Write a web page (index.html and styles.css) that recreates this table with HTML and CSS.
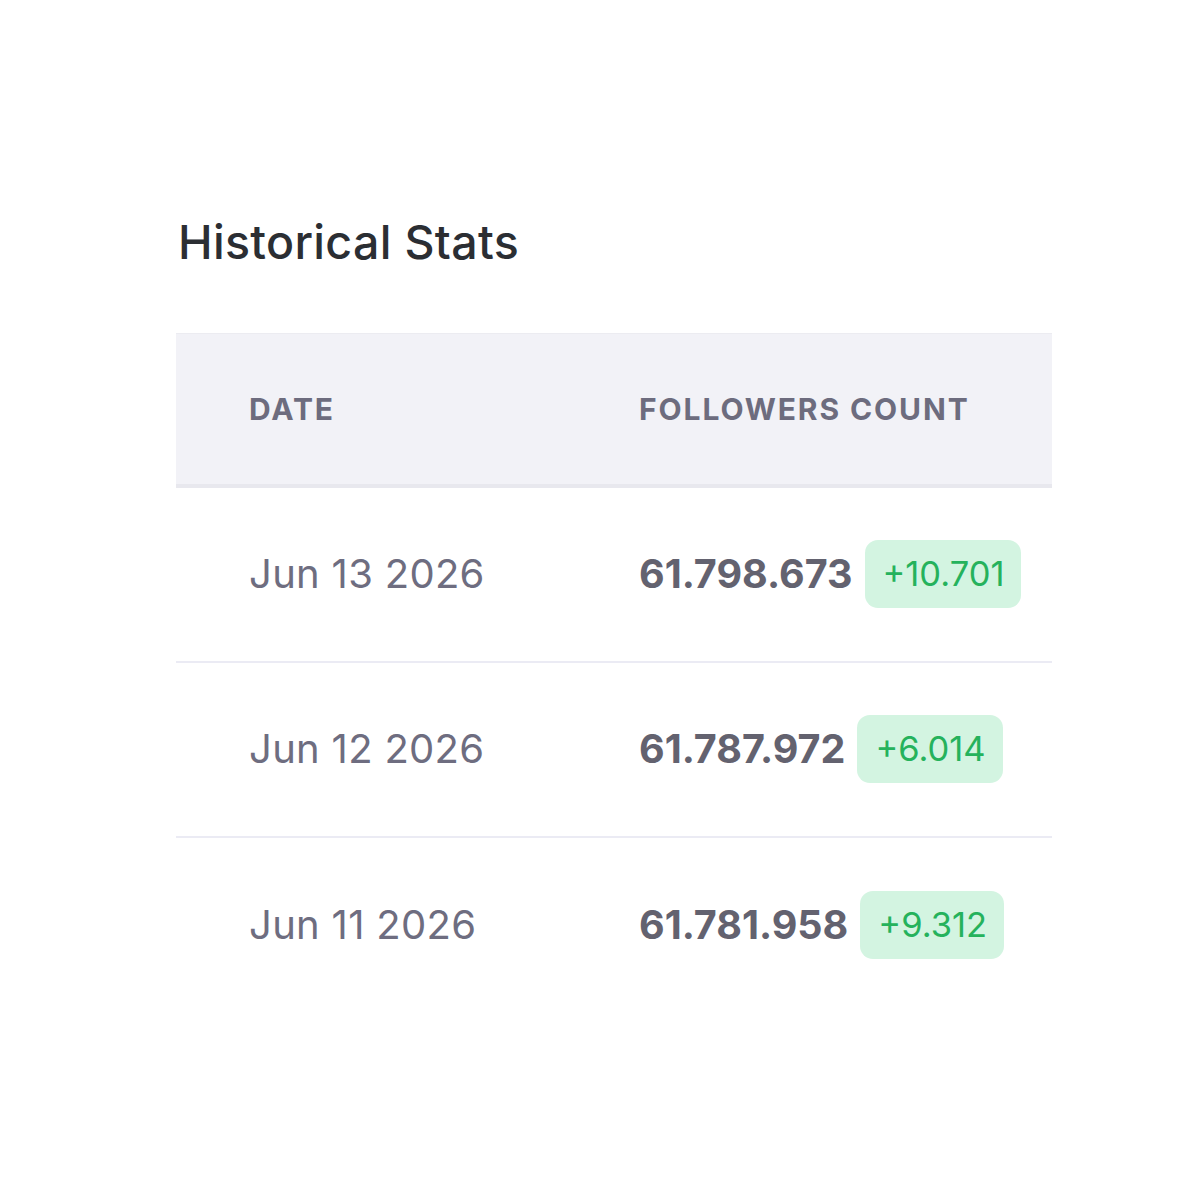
FILE: index.html
```
<!DOCTYPE html>
<html lang="en">
<head>
<meta charset="utf-8">
<title>Historical Stats</title>
<link rel="stylesheet" href="styles.css">
</head>
<body>
<main class="page">
  <h1 class="title">Historical Stats</h1>
  <div class="table">
    <div class="row head">
      <div class="cell date-col">DATE</div>
      <div class="cell">FOLLOWERS COUNT</div>
    </div>
    <div class="row">
      <div class="cell date-col date">Jun 13 2026</div>
      <div class="cell count"><span class="num">61.798.673</span><span class="badge">+10.701</span></div>
    </div>
    <div class="row">
      <div class="cell date-col date">Jun 12 2026</div>
      <div class="cell count"><span class="num">61.787.972</span><span class="badge">+6.014</span></div>
    </div>
    <div class="row last">
      <div class="cell date-col date">Jun 11 2026</div>
      <div class="cell count"><span class="num">61.781.958</span><span class="badge">+9.312</span></div>
    </div>
  </div>
</main>
</body>
</html>
```
FILE: styles.css
```
* { box-sizing: border-box; }
html, body { margin: 0; padding: 0; background: #ffffff; }
body { font-family: Inter, "Noto Sans", sans-serif; }
.page {
  padding: 214px 0 0 176px;
  width: 1052px;
}
.title {
  margin: 0 0 0 2px;
  font-size: 46.5px;
  line-height: 56px;
  font-weight: 500;
  color: #2b2e33;
  letter-spacing: 0.32px;
}
.table {
  margin-top: 63px;
  display: flex;
  flex-direction: column;
}
.row {
  display: grid;
  grid-template-columns: 463px 1fr;
  align-items: center;
  height: 175px;
  border-bottom: 2px solid #ebebf4;
}
.row.last { border-bottom: none; }
.row.head {
  height: 155px;
  background: #f2f2f7;
  border-top: 1px solid #ececf1;
  border-bottom: 4px solid #e8e8ee;
}
.cell { display: flex; align-items: center; }
.date-col { padding-left: 73px; }
.head .cell {
  font-size: 30px;
  font-weight: 700;
  letter-spacing: 1.9px;
  color: #6d6c7e;
}
.date {
  font-size: 40px;
  font-weight: 400;
  color: #6e6d80;
  letter-spacing: 0.3px;
  padding-bottom: 3px;
}
.count { gap: 12px; padding-bottom: 2px; }
.num {
  font-size: 39.5px;
  font-weight: 650;
  color: #63626f;
}
.badge {
  display: flex;
  align-items: center;
  height: 68px;
  padding: 0 17px 0 18px;
  border-radius: 13px;
  background: #d3f4e1;
  color: #25b25c;
  font-size: 34.5px;
  font-weight: 400;
}
```
